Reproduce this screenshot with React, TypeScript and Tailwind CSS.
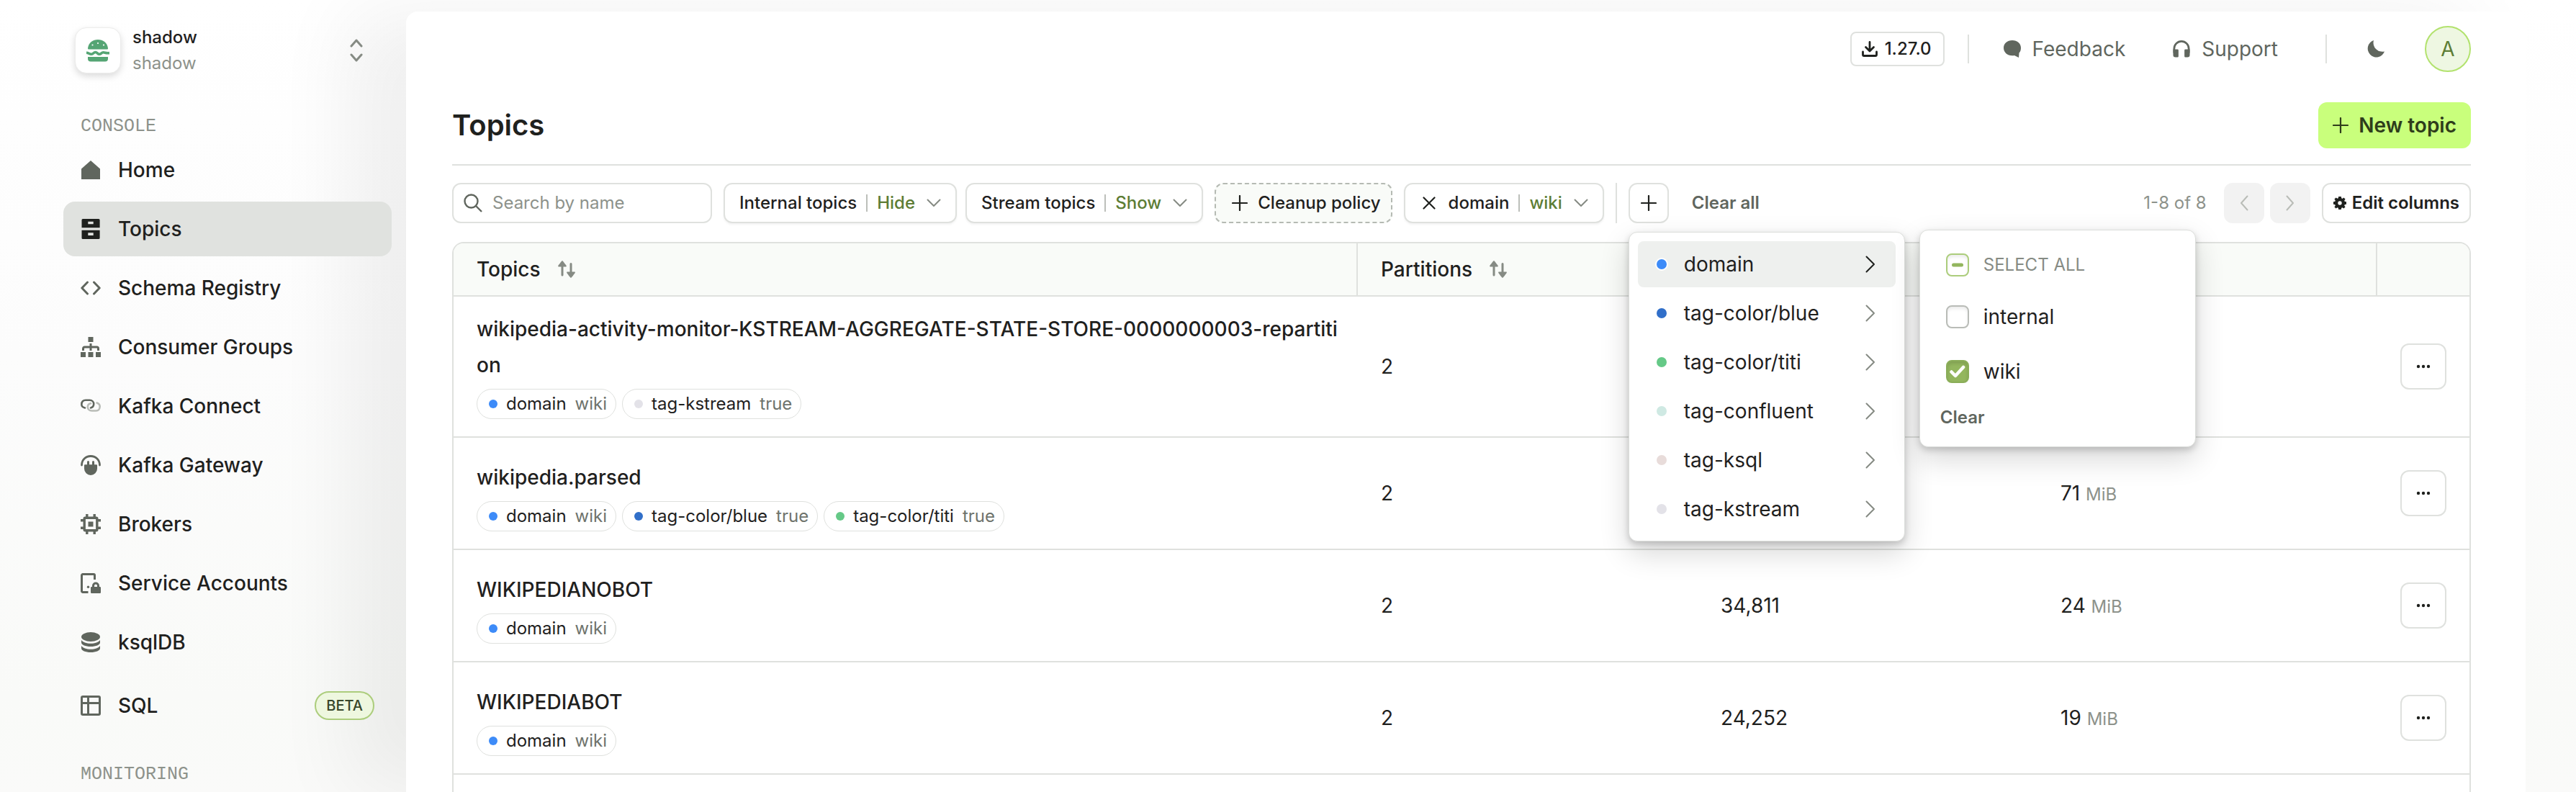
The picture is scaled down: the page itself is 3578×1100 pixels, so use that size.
import React from "react";

function Svg({ w, h, vb, className = "", children }: { w: number; h: number; vb: string; className?: string; children: React.ReactNode }) {
  return (
    <svg width={w} height={h} viewBox={vb} fill="currentColor" className={"shrink-0 " + className} aria-hidden="true">
      {children}
    </svg>
  );
}

const HomeIcon = () => <Svg w={28} h={28} vb="0 0 28 28"><path d="M14 1 27 12.5V27H1V12.5Z" /></Svg>;
const TopicsIcon = () => (
  <Svg w={28} h={28} vb="0 0 28 28">
    <path fillRule="evenodd" d="M3 0h22a1.6 1.6 0 0 1 1.6 1.6V12.3H1.5V1.6A1.6 1.6 0 0 1 3 0Zm7.3 3.7v3.6h7.4V3.7ZM1.5 15.7h25.1v10.7A1.6 1.6 0 0 1 25 28H3a1.6 1.6 0 0 1-1.5-1.6Zm8.8 3.6v3.6h7.4v-3.6Z" />
  </Svg>
);
const CodeIcon = () => (
  <Svg w={28} h={28} vb="0 0 28 28"><path fill="none" stroke="currentColor" strokeWidth="3" strokeLinecap="round" strokeLinejoin="round" d="M9.500 6 1.800 14l7.700 8M18.500 6l7.700 8-7.700 8" /></Svg>
);
const SitemapIcon = () => (
  <Svg w={28} h={28} vb="0 0 28 28">
    <path d="M10.500 0h7v7h-7zM0 21h7v7H0zM10.500 21h7v7h-7zM21 21h7v7h-7z" />
    <path fill="none" stroke="currentColor" strokeWidth="3" d="M14 9v10M3.500 19v-3a2 2 0 0 1 2-2h17a2 2 0 0 1 2 2v3" />
  </Svg>
);
const ConnectIcon = () => (
  <Svg w={28} h={28} vb="0 0 28 28">
    <g fill="none" strokeWidth="2.600" strokeLinecap="round">
      <path stroke="#b9bcb7" d="M22.500 9.500c2.600 1 4.200 2.800 4.200 5 0 3.500-2 6-5.200 6h-6c-3.600 0-5.700-2.500-5.700-5.300 0-2.800 2-4.600 4.200-5" />
      <path stroke="currentColor" d="M6 16.500c-3-.7-4.700-2.200-4.700-4.700C1.300 7.700 3.500 5.800 7 5.800h5.500c3.600 0 5.700 2.300 5.700 5.300 0 2.900-1.700 4.800-4.200 5.400" />
    </g>
  </Svg>
);
const GatewayIcon = () => (
  <Svg w={28} h={28} vb="0 0 28 28">
    <path fill="none" stroke="currentColor" strokeWidth="2.800" strokeLinecap="round" d="M1.500 14C1.500 6.500 7 1.500 14 1.500S26.500 6.500 26.500 14" />
    <path d="M9 9.500a1.500 1.500 0 0 1 3 0V13.300h4V9.500a1.500 1.500 0 0 1 3 0v3.800h3a1 1 0 0 1 1 1V19a9 9 0 0 1-18 0v-4.700a1 1 0 0 1 1-1h3Z" />
  </Svg>
);
const ChipIcon = () => (
  <Svg w={28} h={28} vb="0 0 28 28">
    <path d="M10.500 10.500h7v7h-7z" />
    <rect x="5.200" y="5.200" width="17.600" height="17.600" fill="none" stroke="currentColor" strokeWidth="3.400" rx="1" />
    <path fill="none" stroke="currentColor" strokeWidth="3.400" d="M8.800 0v5M19.200 0v5M8.800 23v5M19.200 23v5M0 8.800h5M0 19.200h5M23 8.800h5M23 19.200h5" />
  </Svg>
);
const AccountIcon = () => (
  <Svg w={28} h={28} vb="0 0 28 28">
    <path fill="none" stroke="currentColor" strokeWidth="3" d="M10.500 26.500H3A1.500 1.500 0 0 1 1.500 25V3A1.500 1.500 0 0 1 3 1.500h15A1.500 1.500 0 0 1 19.500 3v6" />
    <circle cx="10.500" cy="19.200" r="1.700" />
    <path fillRule="evenodd" d="M16 19v-1.500a5 5 0 0 1 10 0V19h.8a1.200 1.200 0 0 1 1.200 1.200v6.600a1.200 1.200 0 0 1-1.200 1.200H15.200a1.200 1.200 0 0 1-1.200-1.200v-6.600a1.200 1.200 0 0 1 1.200-1.200Zm3 0h4v-1.500a2 2 0 0 0-4 0Z" />
  </Svg>
);
const DbIcon = () => (
  <Svg w={28} h={28} vb="0 0 28 28">
    <ellipse cx="14" cy="6.500" rx="13" ry="6.500" />
    <path d="M1 11c2 3 7 4.800 13 4.800S25 14 27 11v3.500c0 3-5.800 5.500-13 5.500S1 17.500 1 14.500Z" />
    <path d="M1 19c2 3 7 4.800 13 4.800S25 22 27 19v3.500c0 3-5.800 5.500-13 5.500S1 25.500 1 22.500Z" />
  </Svg>
);
const GridIcon = () => (
  <Svg w={28} h={28} vb="0 0 28 28">
    <g fill="none" stroke="currentColor" strokeWidth="3">
      <rect x="1.500" y="1.500" width="25" height="25" rx="1.500" />
      <path d="M10.500 1.500v25M1.500 10.500h25" />
    </g>
  </Svg>
);
const Burger = () => (
  <Svg w={32} h={32} vb="0 0 32 32" className="text-[#55a574]">
    <path d="M2 13C3 5 9 1 16 1s13 4 14 12c0 1-.5 1.500-1.500 1.500h-25C2.500 14.500 2 14 2 13Z" />
    <path fill="none" stroke="currentColor" strokeWidth="3.600" d="M0 19.300c3.500 0 3.500 2 7 2 2.800 0 3-2.800 5.500-2.800s3 2.800 5.500 2.800 2.800-2.500 5.500-2.500 3 1.300 8.500.8" />
    <path d="M2 25h28v2.500a4 4 0 0 1-4 4H6a4 4 0 0 1-4-4Z" />
    <g fill="#fff"><circle cx="8.500" cy="8.500" r="1.100" /><circle cx="16" cy="6" r="1.100" /><circle cx="24" cy="8.500" r="1.100" /></g>
  </Svg>
);

function Chevron({ dir, w, h, className = "" }: { dir: "left" | "right" | "down"; w: number; h: number; className?: string }) {
  const d = {
    left: `M${w - 1.5} 1.500 2 ${h / 2} ${w - 1.5} ${h - 1.5}`,
    right: `M1.500 1.500 ${w - 2} ${h / 2} 1.500 ${h - 1.5}`,
    down: `M1.500 1.500 ${w / 2} ${h - 2} ${w - 1.5} 1.500`,
  }[dir];
  return (
    <Svg w={w} h={h} vb={`0 0 ${w} ${h}`} className={className}>
      <path d={d} fill="none" stroke="currentColor" strokeWidth="2" strokeLinecap="round" strokeLinejoin="round" />
    </Svg>
  );
}
const Plus = () => <Svg w={22} h={22} vb="0 0 22 22"><path d="M11 1v20M1 11h20" stroke="currentColor" strokeWidth="2.200" strokeLinecap="round" /></Svg>;
const Cross = () => <Svg w={18} h={18} vb="0 0 18 18"><path d="m1.500 1.500 15 15m0-15-15 15" stroke="currentColor" strokeWidth="2.200" strokeLinecap="round" /></Svg>;
const SortIcon = () => (
  <Svg w={24} h={24} vb="0 0 24 24" className="text-[#868b84]">
    <path d="M6 0c.5 0 5.600 6.600 5.800 7.300.2.700-.2 1.200-.8 1.200H7.500V20a1.500 1.500 0 0 1-3 0V8.500H1C.4 8.500 0 8 .2 7.300.4 6.600 5.500 0 6 0ZM18 24c-.5 0-5.600-6.600-5.800-7.300-.2-.7.2-1.200.8-1.200h3.500V4.500a1.500 1.500 0 0 1 3 0v11H23c.6 0 1 .5.800 1.200C23.600 17.400 18.500 24 18 24Z" />
  </Svg>
);
const Gear = () => (
  <Svg w={18} h={18} vb="0 0 20 20">
    <path fillRule="evenodd" d="M8 0h4l.5 2.600 1.300.6L16 1.600 18.400 4l-1.500 2.300.5 1.200L20 8v4l-2.600.5-.5 1.300 1.500 2.200-2.400 2.400-2.200-1.500-1.300.5L12 20H8l-.5-2.600-1.300-.5L4 18.400 1.600 16l1.500-2.200-.5-1.300L0 12V8l2.600-.5.5-1.300L1.600 4 4 1.600l2.200 1.500 1.300-.5ZM10 7a3 3 0 1 0 0 6 3 3 0 0 0 0-6Z" />
  </Svg>
);

const nav = [
  { label: "Home", icon: <HomeIcon /> },
  { label: "Topics", icon: <TopicsIcon />, active: true },
  { label: "Schema Registry", icon: <CodeIcon /> },
  { label: "Consumer Groups", icon: <SitemapIcon /> },
  { label: "Kafka Connect", icon: <ConnectIcon /> },
  { label: "Kafka Gateway", icon: <GatewayIcon /> },
  { label: "Brokers", icon: <ChipIcon /> },
  { label: "Service Accounts", icon: <AccountIcon /> },
  { label: "ksqlDB", icon: <DbIcon /> },
];

function Sidebar() {
  return (
    <aside className="relative z-10 w-[564px] shrink-0 pl-[88px] pr-5 pt-[38px]">
      <button type="button" className="flex h-16 w-full items-center pl-4 pr-10 text-left">
        <span className="flex size-16 items-center justify-center rounded-2xl border border-[#ececeb] bg-white shadow-[0_4px_10px_rgba(0,0,0,0.14)]"><Burger /></span>
        <span className="ml-4 flex flex-1 flex-col text-2xl leading-[36px]">
          <span className="font-medium text-[#1f211e]">shadow</span>
          <span className="text-[#8d928b]">shadow</span>
        </span>
        <Svg w={18} h={32} vb="0 0 18 32" className="text-[#868b84]"><path fill="none" stroke="currentColor" strokeWidth="3" strokeLinecap="round" strokeLinejoin="round" d="m2 10 7-8 7 8M2 22l7 8 7-8" /></Svg>
      </button>
      <h2 className="mt-[52px] px-6 font-['Liberation_Mono',monospace] text-[25px] leading-[44px] text-[#8d928b]">CONSOLE</h2>
      <nav className="flex flex-col gap-[6px]">
        {nav.map((n) => (
          <a key={n.label} href="#" className={"flex h-[76px] items-center gap-6 rounded-2xl px-6 text-[28px] font-medium " + (n.active ? "bg-[#e0e2df] text-[#1f211e]" : "text-[#60665e]")}>
            {n.icon}
            <span className="text-[#1f211e]">{n.label}</span>
          </a>
        ))}
        <a href="#" className="flex h-[88px] items-center gap-6 rounded-2xl px-6 text-[28px] font-medium text-[#60665e]">
          <GridIcon />
          <span className="flex-1 text-[#1f211e]">SQL</span>
          <span className="rounded-full border-2 border-[#accd7c] bg-[#eef7df] px-[14px] text-[20px] leading-[36px] text-[#38462a]">BETA</span>
        </a>
      </nav>
      <h2 className="mt-[30px] px-6 font-['Liberation_Mono',monospace] text-[25px] leading-[44px] text-[#8d928b]">MONITORING</h2>
    </aside>
  );
}

function TopBar() {
  return (
    <header className="flex h-[104px] items-center justify-end text-[28px] text-[#60665e]">
      <button type="button" className="flex h-12 items-center gap-[10px] rounded-lg border-2 border-[#dfe1de] pl-[14px] pr-4 text-2xl font-medium text-[#1f211e]">
        <Svg w={22} h={22} vb="0 0 22 22"><path fill="none" stroke="currentColor" strokeWidth="2.800" strokeLinecap="round" strokeLinejoin="round" d="M11 1.500v12M5.500 8.500l5.500 5.500 5.500-5.500M1.500 15v4a1.500 1.500 0 0 0 1.500 1.500h16a1.500 1.500 0 0 0 1.500-1.500v-4" /></Svg>
        1.27.0
      </button>
      <span className="ml-8 h-10 w-0.5 bg-[#dfe1de]" />
      <a href="#" className="ml-12 flex items-center gap-4">
        <Svg w={24} h={24} vb="0 0 24 24"><path d="M12 0c7 0 12 4.500 12 10.500 0 3.500-1 5.300-2.500 7L21 24l-6-3c-1 .2-2 .3-3 .3C5 21.300 0 16.500 0 10.500S5 0 12 0Z" /></Svg>
        Feedback
      </a>
      <a href="#" className="ml-[66px] flex items-center gap-4">
        <Svg w={24} h={24} vb="0 0 26 26"><path fill="none" stroke="currentColor" strokeWidth="3" d="M2 19v-6.500a11 11 0 0 1 22 0V19" /><path d="M.5 13.500H7a1.500 1.500 0 0 1 1.500 1.500v9A1.500 1.500 0 0 1 7 25.500H4A3.500 3.500 0 0 1 .5 22ZM25.500 13.500H19a1.500 1.500 0 0 0-1.500 1.500v9a1.500 1.500 0 0 0 1.500 1.500h3a3.500 3.500 0 0 0 3.500-3.500Z" /></Svg>
        Support
      </a>
      <span className="ml-[66px] h-10 w-0.5 bg-[#dfe1de]" />
      <button type="button" aria-label="Dark mode" className="ml-14">
        <Svg w={24} h={24} vb="0 0 24 24"><path d="M9 0a12 12 0 1 0 15 15.500A12.500 12.500 0 0 1 9 0Z" /></Svg>
      </button>
      <button type="button" className="ml-14 size-16 rounded-full border-2 border-[#b2e26d] bg-[#eef7e2] text-[28px] text-[#5d7d35]">A</button>
    </header>
  );
}

const btn = "flex h-14 shrink-0 items-center rounded-xl border-2 border-[#dfe1de] bg-white text-2xl text-[#1f211e] ";

function FilterButton({ name, value, clear }: { name: string; value: string; clear?: boolean }) {
  return (
    <button type="button" className={btn + "px-5 font-medium shadow-[0_2px_3px_rgba(0,0,0,0.05)]"}>
      {clear && <span className="ml-1 mr-[18px]"><Cross /></span>}
      {name}
      <span className="mx-[13px] h-6 w-0.5 bg-[#bcbfba]" />
      <span className="mr-4 text-[#5d7d35]">{value}</span>
      <Chevron dir="down" w={20} h={12} className="text-[#868b84]" />
    </button>
  );
}

const tagColors: Record<string, string> = {
  domain: "bg-[#3d8bf8]",
  "tag-color/blue": "bg-[#316fc9]",
  "tag-color/titi": "bg-[#65c987]",
  "tag-confluent": "bg-[#cfe9e3]",
  "tag-ksql": "bg-[#e8dcda]",
  "tag-kstream": "bg-[#e3e2e8]",
};

function TagMenu() {
  return (
    <div role="menu" className="absolute left-0 top-[68px] z-20 flex w-[384px] flex-col gap-1 rounded-xl border border-[#dcdedb] bg-white p-3 text-[28px] text-[#1f211e] shadow-[0_16px_40px_rgba(0,0,0,0.16),0_4px_10px_rgba(0,0,0,0.18)]">
      {Object.keys(tagColors).map((t, i) => (
        <button key={t} type="button" role="menuitem" className={"flex h-16 items-center rounded-lg px-6 " + (i === 0 ? "bg-[#eef0ee]" : "")}>
          <span className={"box-content size-[14px] rounded-full border-2 border-white " + tagColors[t]} />
          <span className="ml-[22px] flex-1 text-left">{t}</span>
          <Chevron dir="right" w={14} h={24} className={"mr-1 " + (i === 0 ? "text-[#1f211e]" : "text-[#868b84]")} />
        </button>
      ))}
      <div className="absolute left-[403px] top-[-4px] flex w-[384px] flex-col rounded-xl border border-[#dcdedb] bg-white px-7 pb-[14px] pt-[14px] shadow-[0_16px_40px_rgba(0,0,0,0.16),0_4px_10px_rgba(0,0,0,0.18)]">
        <CheckRow id="all" label="SELECT ALL" state="some" />
        <CheckRow id="internal" label="internal" state="off" />
        <CheckRow id="wiki" label="wiki" state="on" />
        <button type="button" className="self-start text-2xl font-semibold leading-[52px] text-[#60665e]">Clear</button>
      </div>
    </div>
  );
}

function CheckRow({ id, label, state }: { id: string; label: string; state: "on" | "off" | "some" }) {
  const box = {
    on: "border-[#8aad58] bg-[#93b65e] shadow-[inset_0_3px_4px_rgba(0,0,0,0.12)]",
    off: "border-[#b9bcb7] bg-white shadow-[inset_0_3px_4px_rgba(0,0,0,0.08)]",
    some: "border-[#accd7c] bg-white shadow-[inset_0_3px_4px_rgba(0,0,0,0.08)]",
  }[state];
  return (
    <label htmlFor={id} className={"flex items-center gap-5 pl-2 " + (state === "some" ? "h-[68px] text-2xl text-[#868b84]" : "h-[76px]")}>
      <span className="relative size-8">
        <input id={id} type="checkbox" defaultChecked={state === "on"} className={"block size-8 appearance-none rounded-lg border-2 " + box} />
        {state === "on" && <svg className="pointer-events-none absolute inset-0 text-white" width="32" height="32" viewBox="0 0 32 32" fill="none" stroke="currentColor" strokeWidth="4.500" strokeLinecap="round" strokeLinejoin="round"><path d="m7.500 16.500 5.500 5.500 11-12" /></svg>}
        {state === "some" && <svg className="pointer-events-none absolute inset-0 text-[#93b65e]" width="32" height="32" viewBox="0 0 32 32" fill="currentColor"><rect x="8" y="13.500" width="16" height="5" rx="2.500" /></svg>}
      </span>
      {label}
    </label>
  );
}

function Toolbar() {
  return (
    <div className="flex items-center pb-[26px] pt-6">
      <label className="flex h-14 w-[361px] items-center gap-[14px] rounded-xl border-2 border-[#dfe1de] px-[14px] text-[#60665e]">
        <Svg w={26} h={26} vb="0 0 26 26"><g fill="none" stroke="currentColor" strokeWidth="2.400"><circle cx="10.500" cy="10.500" r="9" /><path d="m17 17 8 8" /></g></Svg>
        <input type="text" aria-label="Search by name" placeholder="Search by name" className="min-w-0 flex-1 text-2xl outline-none placeholder:text-[#8d928b]" />
      </label>
      <div className="ml-4 flex gap-3">
        <FilterButton name="Internal topics" value="Hide" />
        <FilterButton name="Stream topics" value="Show" />
      </div>
      <button type="button" className="ml-4 flex h-14 items-center gap-[14px] rounded-xl border-2 border-dashed border-[#b5bab3] bg-[#f9fbf8] pl-[22px] pr-[14px] text-2xl font-medium text-[#1f211e]">
        <Plus />Cleanup policy
      </button>
      <div className="ml-4"><FilterButton name="domain" value="wiki" clear /></div>
      <span className="ml-4 h-14 w-0.5 bg-[#dfe1de]" />
      <div className="relative ml-4">
        <button type="button" aria-label="Add filter" className={btn + "w-14 justify-center"}><Plus /></button>
        <TagMenu />
      </div>
      <button type="button" className="ml-8 text-2xl font-semibold text-[#60665e]">Clear all</button>
      <span className="ml-auto text-2xl text-[#8d928b]">1-8 of 8</span>
      <button type="button" disabled aria-label="Previous page" className="ml-6 flex h-14 w-14 items-center justify-center rounded-xl bg-[#f2f2f2] text-[#b9bcb7]"><Chevron dir="left" w={12} h={22} /></button>
      <button type="button" disabled aria-label="Next page" className="ml-2 flex h-14 w-14 items-center justify-center rounded-xl bg-[#f2f2f2] text-[#b9bcb7]"><Chevron dir="right" w={12} h={22} /></button>
      <button type="button" className={btn + "ml-4 gap-2 px-[14px] font-semibold"}><Gear />Edit columns</button>
    </div>
  );
}

type Row = { name: string; tags: [string, string][]; parts: string; count: string; size: string };
const dom: [string, string] = ["domain", "wiki"];
const rows: Row[] = [
  { name: "wikipedia-activity-monitor-KSTREAM-AGGREGATE-STATE-STORE-0000000003-repartition", tags: [dom, ["tag-kstream", "true"]], parts: "2", count: "", size: "" },
  { name: "wikipedia.parsed", tags: [dom, ["tag-color/blue", "true"], ["tag-color/titi", "true"]], parts: "2", count: "", size: "71" },
  { name: "WIKIPEDIANOBOT", tags: [dom], parts: "2", count: "34,811", size: "24" },
  { name: "WIKIPEDIABOT", tags: [dom], parts: "2", count: "24,252", size: "19" },
];

function TopicsTable() {
  const td = "border-b-2 border-[#dfe1de] pl-8 pr-6 ";
  const th = "border-b-2 border-[#dfe1de] px-8 text-left font-medium ";
  return (
    <div className="overflow-hidden rounded-t-2xl border-2 border-b-0 border-[#dfe1de]">
      <table className="w-full table-fixed border-separate border-spacing-0 text-[28px] text-[#1f211e]">
        <colgroup>
          <col />
          <col className="w-[472px]" />
          <col className="w-[472px]" />
          <col className="w-[472px]" />
          <col className="w-[128px]" />
        </colgroup>
        <thead>
          <tr className="h-[74px] bg-[#f9fbf8]">
            <th className={th + "border-r-2"}><span className="flex items-center gap-6">Topics<SortIcon /></span></th>
            <th className={th}><span className="flex items-center gap-6">Partitions<SortIcon /></span></th>
            <th className={th} />
            <th className={th + "border-r-2"} />
            <th className={th} />
          </tr>
        </thead>
        <tbody>
          {rows.map((r) => (
            <tr key={r.name} className="h-[156px]">
              <td className={td + "pb-6 pt-5 align-bottom"}>
                <a href="#" className="block break-all font-medium leading-[50px]">{r.name}</a>
                <div className="mt-2 flex gap-2">
                  {r.tags.map(([k, v]) => (
                    <span key={k} className="flex h-[42px] items-center rounded-full border border-[#dfe1de] pl-4 pr-3 text-2xl">
                      <span className={"size-3 rounded-full " + tagColors[k]} />
                      <span className="ml-3">{k}</span>
                      <span className="ml-3 text-[#6e736c]">{v}</span>
                    </span>
                  ))}
                </div>
              </td>
              <td className={td}>{r.parts}</td>
              <td className={td}>{r.count}</td>
              <td className={td}>{r.size && <span>{r.size} <span className="text-2xl text-[#8d928b]">MiB</span></span>}</td>
              <td className="border-b-2 border-[#dfe1de]">
                <button type="button" aria-label="Row actions" className="mx-auto flex size-16 items-center justify-center rounded-xl border-2 border-[#dfe1de]">
                  <Svg w={20} h={6} vb="0 0 20 6"><circle cx="3" cy="3" r="2.200" /><circle cx="10" cy="3" r="2.200" /><circle cx="17" cy="3" r="2.200" /></Svg>
                </button>
              </td>
            </tr>
          ))}
          <tr className="h-[156px]"><td colSpan={5} /></tr>
        </tbody>
      </table>
    </div>
  );
}

export default function App() {
  return (
    <div className="flex h-screen overflow-hidden bg-[linear-gradient(180deg,#ffffff_0%,#fcfcfc_45%,#f9faf8_88%,#fafaf9_100%)] pr-[70px] font-['Inter',sans-serif]">
      <Sidebar />
      <main className="mt-4 min-w-0 flex-1 rounded-t-2xl bg-white pl-16 pr-[76px] shadow-[-80px_0_110px_0_rgba(0,0,0,0.06)]">
        <TopBar />
        <div className="flex h-[110px] items-center justify-between border-b-2 border-[#dfe1de]">
          <h1 className="text-[40px] font-semibold text-[#1f211e]">Topics</h1>
          <button type="button" className="flex h-16 items-center gap-[14px] rounded-xl bg-[#c9ff7c] px-5 text-[28px] font-semibold text-[#2f3d1b]"><Plus />New topic</button>
        </div>
        <Toolbar />
        <TopicsTable />
      </main>
    </div>
  );
}
